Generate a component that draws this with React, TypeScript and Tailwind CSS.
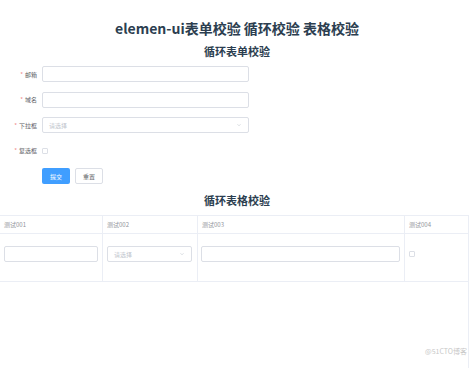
import React from "react";

const font = { fontFamily: '"Noto Sans CJK SC", "Noto Sans", sans-serif' };

const FormRow: React.FC<{ label: string; children: React.ReactNode }> = ({ label, children }) => (
  <div className="flex h-4 items-center">
    <label className="w-[42px] shrink-0 pr-[5px] text-right text-[6px] text-[#606266]">
      <span className="mr-[2px] text-[#f08a8a]">*</span>
      {label}
    </label>
    {children}
  </div>
);

const Chevron = () => (
  <svg width="6" height="6" viewBox="0 0 12 12" fill="none" stroke="#c0c4cc" strokeWidth="1.2">
    <path d="M3 4.5 L6 7.5 L9 4.5" />
  </svg>
);

const Select: React.FC<{ className: string }> = ({ className }) => (
  <div
    className={`flex items-center justify-between rounded-[2px] border border-[#dcdfe6] bg-white px-[6px] text-[6px] text-[#c0c4cc] ${className}`}
  >
    <span>请选择</span>
    <Chevron />
  </div>
);

export default function App() {
  return (
    <div className="h-[368px] w-[474px] overflow-hidden bg-white text-[#2c3e50]" style={font}>
      <h1 className="pt-[18px] text-center text-[14px] font-bold leading-[20px]">
        elemen-ui表单校验 循环校验 表格校验
      </h1>
      <h2 className="mt-[6px] text-center text-[11px] font-bold leading-[14px]">循环表单校验</h2>

      <div className="mt-[8px] flex flex-col gap-[9.5px]">
        <FormRow label="邮箱">
          <div className="h-4 w-[207px] rounded-[2px] border border-[#dcdfe6]" />
        </FormRow>
        <FormRow label="域名">
          <div className="h-4 w-[207px] rounded-[2px] border border-[#dcdfe6]" />
        </FormRow>
        <FormRow label="下拉框">
          <Select className="h-4 w-[207px]" />
        </FormRow>
        <FormRow label="复选框">
          <div className="h-[6px] w-[6px] rounded-[1px] border border-[#dcdfe6]" />
        </FormRow>
        <div className="flex h-4 items-center gap-[5px] pl-[42px]">
          <button className="h-4 w-[28px] rounded-[2px] bg-[#409eff] text-[6px] text-white">提交</button>
          <button className="h-4 w-[28px] rounded-[2px] border border-[#dcdfe6] text-[6px] text-[#606266]">
            重置
          </button>
        </div>
      </div>

      <h2 className="mt-[9px] text-center text-[11px] font-bold leading-[14px]">循环表格校验</h2>

      <div className="mt-[8px] h-[200px] w-[469px] border-r border-[#ebeef5]">
        <div className="flex h-[19px] border-y border-[#ebeef5] text-[6px] text-[#909399]">
          <div className="flex w-[103px] items-center border-r border-[#ebeef5] pl-[4px]">测试001</div>
          <div className="flex w-[95px] items-center border-r border-[#ebeef5] pl-[4px]">测试002</div>
          <div className="flex w-[207px] items-center border-r border-[#ebeef5] pl-[4px]">测试003</div>
          <div className="flex flex-1 items-center pl-[4px]">测试004</div>
        </div>
        <div className="flex h-[48px] border-b border-[#ebeef5]">
          <div className="w-[103px] border-r border-[#ebeef5] px-[4px] pt-[12px]">
            <div className="h-4 rounded-[2px] border border-[#dcdfe6]" />
          </div>
          <div className="w-[95px] border-r border-[#ebeef5] pl-[4px] pr-[5px] pt-[12px]">
            <Select className="h-4" />
          </div>
          <div className="w-[207px] border-r border-[#ebeef5] pl-[3px] pr-[4px] pt-[12px]">
            <div className="h-4 rounded-[2px] border border-[#dcdfe6]" />
          </div>
          <div className="flex-1 pl-[4px] pt-[17px]">
            <div className="h-[6px] w-[6px] rounded-[1px] border border-[#dcdfe6]" />
          </div>
        </div>
        <div className="flex h-[80px] items-end justify-end pb-[6px] pr-[1px] text-[7px] text-[#c8c8c8]">
          @51CTO博客
        </div>
      </div>
    </div>
  );
}
